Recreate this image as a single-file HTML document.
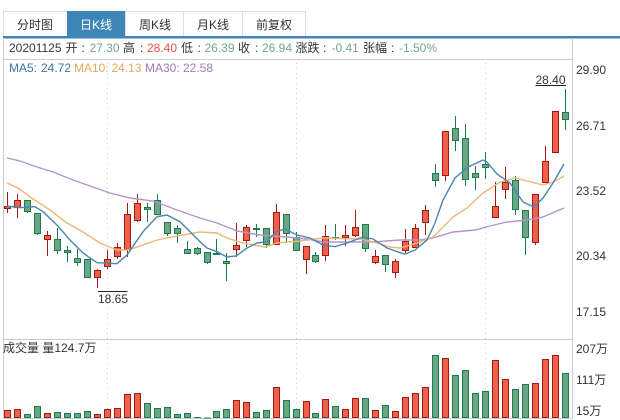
<!DOCTYPE html>
<html lang="zh-CN">
<head>
<meta charset="utf-8">
<style>
html,body{margin:0;padding:0;background:#fff;width:620px;height:420px;overflow:hidden}
svg{display:block}
text{font-family:"Liberation Sans","Noto Sans CJK SC",sans-serif;font-size:12px;fill:#333}
.wr{stroke:#a01c10;stroke-width:1;fill:none}
.wg{stroke:#1c7a4c;stroke-width:1;fill:none}
.br{stroke:#a01c10;stroke-width:1;fill:#ef604c}
.bg{stroke:#1c7a4c;stroke-width:1;fill:#69a784}
.g{fill:#6fa98a}
.r{fill:#e0534a}
.b{fill:#3a78a8}
.o{fill:#e5a95c}
.p{fill:#a07bb5}
</style>
</head>
<body>
<svg width="620" height="420" viewBox="0 0 620 420" xmlns="http://www.w3.org/2000/svg">
<rect width="620" height="420" fill="#fff"/>

<!-- tabs -->
<path d="M3.5 36V11.5H305.5V36M125.5 11.5V36M183.5 11.5V36M242.5 11.5V36" fill="none" stroke="#ddd"/>
<rect x="67" y="11" width="58" height="25" fill="#3f86b8"/>
<rect x="3" y="36" width="617" height="2.5" fill="#3f86b8"/>
<text x="17" y="29">分时图</text>
<text x="80" y="29" style="fill:#fff">日K线</text>
<text x="139" y="29">周K线</text>
<text x="197" y="29">月K线</text>
<text x="256" y="29">前复权</text>

<!-- frame -->
<path d="M3.5 38V418.5H572.5M572.5 38V418.5M3 59.5H572M3 339.5H572" fill="none" stroke="#ccc"/>
<path d="M107.5 63V418M296.5 63V418M485.5 63V418" fill="none" stroke="#c8c8c8" stroke-dasharray="1 4"/>

<!-- info row -->
<text x="9" y="52">20201125</text>
<text x="65.5" y="52">开</text><text x="81.5" y="52">:</text><text x="89.5" y="52" class="g">27.30</text>
<text x="123" y="52">高</text><text x="140" y="52">:</text><text x="147" y="52" class="r">28.40</text>
<text x="181" y="52">低</text><text x="197.5" y="52">:</text><text x="204.5" y="52" class="g">26.39</text>
<text x="238" y="52">收</text><text x="255" y="52">:</text><text x="262" y="52" class="g">26.94</text>
<text x="295.5" y="52">涨跌</text><text x="323" y="52">:</text><text x="331.5" y="52" class="g">-0.41</text>
<text x="363" y="52">张幅</text><text x="391" y="52">:</text><text x="399" y="52" class="g">-1.50%</text>

<!-- MA row -->
<text x="9" y="72" class="b">MA5:</text><text x="41" y="72" class="b">24.72</text>
<text x="74" y="72" class="o">MA10:</text><text x="111.5" y="72" class="o">24.13</text>
<text x="145" y="72" class="p">MA30:</text><text x="183" y="72" class="p">22.58</text>

<!-- axis labels -->
<text x="576" y="74">29.90</text>
<text x="576" y="130">26.71</text>
<text x="576" y="195">23.52</text>
<text x="576" y="260">20.34</text>
<text x="576" y="316">17.15</text>
<text x="576" y="353">207万</text>
<text x="576" y="384">111万</text>
<text x="576" y="415">15万</text>
<text x="3" y="352">成交量 量124.7万</text>

<!-- wicks -->
<path class="wr" d="M7.5 192V213M17.5 194V218M47.5 231V256M97.5 269V288M107.5 250V269M117.5 243V259M127.5 203V257M137.5 194V222M236.5 223V257M246.5 225V247M276.5 204V244M306.5 246V274M325.5 225V261M345.5 225V246M355.5 210V237M375.5 250V264M395.5 259V278M405.5 229V253M415.5 224V248M425.5 205V235M445.5 131V181M495.5 182V217M505.5 167V199M535.5 194V245M545.5 146V182M555.5 111V152"/>
<path class="wg" d="M27.5 200V213M37.5 213V235M57.5 228V254M67.5 246V262M77.5 249V266M87.5 259V278M147.5 203V222M157.5 194V215M167.5 222V236M177.5 225V243M187.5 241V254M197.5 247V255M207.5 252V264M216.5 239V255M226.5 253V281M256.5 224V237M266.5 228V248M286.5 214V243M296.5 232V251M315.5 252V263M335.5 224V240M365.5 224V252M385.5 255V272M435.5 164V187M455.5 116V151M465.5 124V186M475.5 166V190M485.5 152V179M515.5 176V215M525.5 210V255M565.5 89V130"/>

<!-- bodies -->
<path class="br" d="M4.5 206.5h6V208.5h-6zM14.5 200.5h6V207.5h-6zM44.5 235.5h6V239.5h-6zM94.5 270.5h6V277.5h-6zM104.5 259.5h6V266.5h-6zM114.5 247.5h6V256.5h-6zM124.5 214.5h6V249.5h-6zM134.5 203.5h6V220.5h-6zM233.5 245.5h6V249.5h-6zM243.5 227.5h6V240.5h-6zM273.5 212.5h6V244.5h-6zM303.5 246.5h6V259.5h-6zM322.5 236.5h6V255.5h-6zM342.5 235.5h6V237.5h-6zM352.5 227.5h6V235.5h-6zM372.5 256.5h6V262.5h-6zM392.5 261.5h6V272.5h-6zM402.5 241.5h6V250.5h-6zM412.5 228.5h6V247.5h-6zM422.5 210.5h6V222.5h-6zM442.5 131.5h6V175.5h-6zM492.5 206.5h6V217.5h-6zM502.5 182.5h6V189.5h-6zM532.5 194.5h6V242.5h-6zM542.5 161.5h6V182.5h-6zM552.5 111.5h6V152.5h-6z"/>
<path class="bg" d="M24.5 200.5h6V211.5h-6zM34.5 213.5h6V233.5h-6zM54.5 239.5h6V250.5h-6zM64.5 250.5h6V252.5h-6zM74.5 258.5h6V262.5h-6zM84.5 259.5h6V277.5h-6zM144.5 207.5h6V209.5h-6zM154.5 200.5h6V214.5h-6zM164.5 222.5h6V233.5h-6zM174.5 228.5h6V233.5h-6zM184.5 249.5h6V253.5h-6zM194.5 248.5h6V253.5h-6zM204.5 252.5h6V262.5h-6zM213.5 253.5h6V254.5h-6zM223.5 261.5h6V263.5h-6zM253.5 228.5h6V229.5h-6zM263.5 228.5h6V244.5h-6zM283.5 214.5h6V233.5h-6zM293.5 237.5h6V250.5h-6zM312.5 255.5h6V261.5h-6zM332.5 237.5h6V238.5h-6zM362.5 224.5h6V248.5h-6zM382.5 255.5h6V264.5h-6zM432.5 173.5h6V180.5h-6zM452.5 128.5h6V140.5h-6zM462.5 138.5h6V179.5h-6zM472.5 173.5h6V177.5h-6zM482.5 164.5h6V167.5h-6zM512.5 180.5h6V209.5h-6zM522.5 210.5h6V237.5h-6zM562.5 112.5h6V119.5h-6z"/>

<!-- moving averages -->
<path fill="none" stroke="#b594c6" stroke-width="1.4" d="M7 158L20 161L37 167L53 172L73 180L93 187L110 193L130 198L153 201L177 210L200 218L217 223L237 231L260 235L287 237L307 239L323 242L350 242L370 242L387 241L400 240L420 240L433 238L453 232L475 230L490 226L507 222L527 220L543 217L564 208"/>
<path fill="none" stroke="#ebb778" stroke-width="1.4" d="M7 183L18 188L33 199L50 210L67 223L83 232L100 243L117 250L128 250L140 246L157 240L177 236L200 232L217 233L227 238L243 243L265 247L277 243L300 241L323 238L360 239L377 243L390 247L400 248L417 243L433 237L453 217L467 208L483 193L500 182L515 178L527 181L543 185L553 182L564 176"/>
<path fill="none" stroke="#4a85b0" stroke-width="1.4" d="M7 206L20 207.7L35 206.7L43 211.7L57 225L70 240L83 253L97 262.7L117 263.7L127 255L143 231.7L157 216.7L167 215L180 221.7L200 241.7L207 248L217 251.7L227 257L236 256L247 248L257 243L267 241.7L276 231.7L285 229L297 235L310 238L323 245L335 246.7L347 243L363 237L373 239L387 248L400 252.7L405 254L415 250L427 240L435 223L443 200L455 178L468 167L483 160L487 162L497 174L510 183L523 202L534 207L543 198L553 183L564 164"/>

<!-- high / low markers -->
<text x="535.5" y="84">28.40</text>
<path d="M535.5 85.5H566" stroke="#222" fill="none"/>
<path d="M98 291.5H127.5" stroke="#222" fill="none"/>
<text x="98" y="303">18.65</text>

<!-- volume -->
<path class="br" d="M4.5 410.5h6V417.5h-6zM14.5 409.5h6V417.5h-6zM44.5 413.5h6V417.5h-6zM94.5 414.5h6V417.5h-6zM104.5 409.5h6V417.5h-6zM114.5 408.5h6V417.5h-6zM124.5 394.5h6V417.5h-6zM134.5 393.5h6V417.5h-6zM233.5 400.5h6V417.5h-6zM243.5 402.5h6V417.5h-6zM273.5 387.5h6V417.5h-6zM303.5 401.5h6V417.5h-6zM322.5 399.5h6V417.5h-6zM342.5 409.5h6V417.5h-6zM352.5 398.5h6V417.5h-6zM372.5 410.5h6V417.5h-6zM392.5 411.5h6V417.5h-6zM402.5 397.5h6V417.5h-6zM412.5 393.5h6V417.5h-6zM422.5 387.5h6V417.5h-6zM442.5 358.5h6V417.5h-6zM492.5 360.5h6V417.5h-6zM502.5 379.5h6V417.5h-6zM532.5 383.5h6V417.5h-6zM542.5 359.5h6V417.5h-6zM552.5 355.5h6V417.5h-6z"/>
<path class="bg" d="M24.5 414.5h6V417.5h-6zM34.5 406.5h6V417.5h-6zM54.5 412.5h6V417.5h-6zM64.5 413.5h6V417.5h-6zM74.5 413.5h6V417.5h-6zM84.5 411.5h6V417.5h-6zM144.5 403.5h6V417.5h-6zM154.5 408.5h6V417.5h-6zM164.5 407.5h6V417.5h-6zM174.5 414.5h6V417.5h-6zM184.5 413.5h6V417.5h-6zM213.5 411.5h6V417.5h-6zM223.5 409.5h6V417.5h-6zM253.5 412.5h6V417.5h-6zM263.5 410.5h6V417.5h-6zM283.5 400.5h6V417.5h-6zM293.5 409.5h6V417.5h-6zM312.5 413.5h6V417.5h-6zM332.5 406.5h6V417.5h-6zM362.5 398.5h6V417.5h-6zM382.5 405.5h6V417.5h-6zM432.5 355.5h6V417.5h-6zM452.5 375.5h6V417.5h-6zM462.5 370.5h6V417.5h-6zM472.5 393.5h6V417.5h-6zM482.5 391.5h6V417.5h-6zM512.5 389.5h6V417.5h-6zM522.5 384.5h6V417.5h-6zM562.5 373.5h6V417.5h-6z"/>
<path d="M194 417.5h7M204 418h7" stroke="#1c7a4c" fill="none"/>
</svg>
</body>
</html>
